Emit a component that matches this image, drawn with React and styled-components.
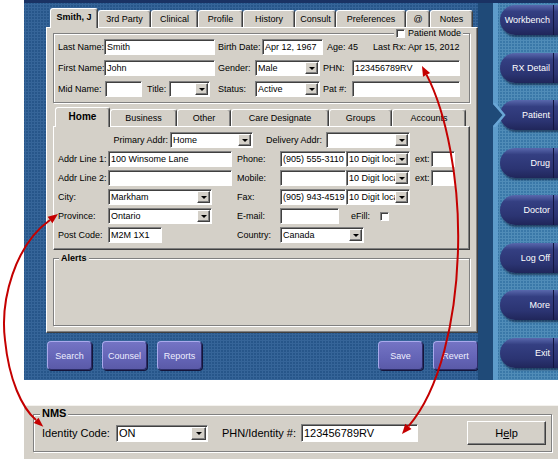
import React from 'react'
import styled, { createGlobalStyle } from 'styled-components'

const GlobalStyle = createGlobalStyle`
  body {
    margin: 0;
    background: #fff;
    font-family: "Liberation Sans", Arial, sans-serif;
  }
`

const topTabs = [
  { name: 'Smith, J', w: 48, active: true },
  { name: '3rd Party', w: 53 },
  { name: 'Clinical', w: 47 },
  { name: 'Profile', w: 45 },
  { name: 'History', w: 52 },
  { name: 'Consult', w: 41 },
  { name: 'Preferences', w: 70 },
  { name: '@', w: 24 },
  { name: 'Notes', w: 43 },
]

const addrTabs = [
  { name: 'Home', w: 55, active: true },
  { name: 'Business', w: 67 },
  { name: 'Other', w: 54 },
  { name: 'Care Designate', w: 98 },
  { name: 'Groups', w: 63 },
  { name: 'Accounts', w: 74 },
]

const sideNav = ['Workbench', 'RX Detail', 'Patient', 'Drug', 'Doctor', 'Log Off', 'More', 'Exit']

const Select = ({ w, h, big, children }) => (
  <SelectBox $w={w} $h={h}>
    <SelectValue>{children}</SelectValue>
    <DropBtn $big={big} />
  </SelectBox>
)

const App = () => {
  return (
    <Page>
      <GlobalStyle />
      <Screen>
        <MainArea>
          <Window>
            <TabRow>
              {topTabs.map((t) => (
                <Tab key={t.name} $w={t.w} $active={t.active}>{t.name}</Tab>
              ))}
            </TabRow>
            <Panel>
              <GroupBox $h={70}>
                <CheckLegend><Check />Patient Mode</CheckLegend>
                <Row>
                  <Label $w={46}>Last Name:</Label>
                  <Field $w={111}>Smith</Field>
                  <Label $w={47} $gap={3}>Birth Date:</Label>
                  <Field $w={61}>Apr 12, 1967</Field>
                  <Label $w={50} $gap={4}>Age: 45</Label>
                  <Label $w={90}>Last Rx: Apr 15, 2012</Label>
                </Row>
                <Row>
                  <Label $w={46}>First Name:</Label>
                  <Field $w={111}>John</Field>
                  <Label $w={40} $gap={3}>Gender:</Label>
                  <Select w={65}>Male</Select>
                  <Label $w={32} $gap={3}>PHN:</Label>
                  <Field $w={108}>123456789RV</Field>
                </Row>
                <Row>
                  <Label $w={47}>Mid Name:</Label>
                  <Field $w={37} />
                  <Label $w={27} $gap={5}>Title:</Label>
                  <Select w={41} />
                  <Label $w={45} $gap={8}>Status:</Label>
                  <Select w={65}>Active</Select>
                  <Label $w={32} $gap={3}>Pat #:</Label>
                  <Field $w={108} />
                </Row>
              </GroupBox>

              <InnerTabRow>
                {addrTabs.map((t) => (
                  <Tab key={t.name} $w={t.w} $active={t.active} $inner>{t.name}</Tab>
                ))}
              </InnerTabRow>
              <TabPanel>
                <Row>
                  <Label $w={112} $right>Primary Addr:</Label>
                  <Select w={83}>Home</Select>
                  <Label $w={73} $gap={13}>Delivery Addr:</Label>
                  <Select w={84} />
                </Row>
                <Row>
                  <Label $w={50}>Addr Line 1:</Label>
                  <Field $w={124}>100 Winsome Lane</Field>
                  <Label $w={48} $gap={5}>Phone:</Label>
                  <Field $w={66}>(905) 555-3110</Field>
                  <Select w={64}>10 Digit local</Select>
                  <Label $w={21} $gap={5}>ext:</Label>
                  <Field $w={24} />
                </Row>
                <Row>
                  <Label $w={50}>Addr Line 2:</Label>
                  <Field $w={124} />
                  <Label $w={48} $gap={5}>Mobile:</Label>
                  <Field $w={66} />
                  <Select w={64}>10 Digit local</Select>
                  <Label $w={21} $gap={5}>ext:</Label>
                  <Field $w={24} />
                </Row>
                <Row>
                  <Label $w={50}>City:</Label>
                  <Select w={104}>Markham</Select>
                  <Label $w={68} $gap={25}>Fax:</Label>
                  <Field $w={66}>(905) 943-4519</Field>
                  <Select w={64}>10 Digit local</Select>
                </Row>
                <Row>
                  <Label $w={50}>Province:</Label>
                  <Select w={104}>Ontario</Select>
                  <Label $w={68} $gap={25}>E-mail:</Label>
                  <Field $w={59} />
                  <Label $w={41} $gap={12}>eFill:</Label>
                  <Check />
                </Row>
                <Row>
                  <Label $w={50}>Post Code:</Label>
                  <Field $w={54}>M2M 1X1</Field>
                  <Label $w={118} $gap={75}>Country:</Label>
                  <Select w={84}>Canada</Select>
                </Row>
              </TabPanel>

              <GroupBox $h={68} $mt={8}>
                <Legend>Alerts</Legend>
              </GroupBox>
            </Panel>
          </Window>

          <ButtonRow>
            <ActionButton>Search</ActionButton>
            <ActionButton>Counsel</ActionButton>
            <ActionButton>Reports</ActionButton>
            <Spacer />
            <ActionButton>Save</ActionButton>
            <ActionButton>Revert</ActionButton>
          </ButtonRow>
        </MainArea>

        <Sidebar>
          <DarkStrip />
          <LightLine />
          <SideBody>
            {sideNav.map((name) => (
              <SideButton key={name}>{name}</SideButton>
            ))}
          </SideBody>
          <Pointer width="16" height="24" viewBox="0 0 16 24">
            <polygon points="0,0 11,12 0,24" fill="#1f4a78" />
            <polyline points="2,0 12,12 2,24" fill="none" stroke="#6aa6d6" strokeWidth="2.5" />
          </Pointer>
        </Sidebar>
      </Screen>

      <NmsPanel>
        <NmsBox>
          <NmsLegend>NMS</NmsLegend>
          <NmsLabel $w={74}>Identity Code:</NmsLabel>
          <Select w={92} h={17} big>ON</Select>
          <NmsLabel $w={93} $gap={14}>PHN/Identity #:</NmsLabel>
          <Field $w={117} $h={18}>123456789RV</Field>
          <Spacer />
          <HelpButton>H<u>e</u>lp</HelpButton>
        </NmsBox>
      </NmsPanel>

      <Arrows width="558" height="459" viewBox="0 0 558 459">
        <g stroke="#c40000" strokeWidth="2" fill="none">
          <path d="M426.6,74.9 C446,112 460,180 458,250 C456,320 440,390 408.4,426.3" />
          <path d="M50,220 C15,245 0,300 5,340 C9,380 22,408 36,420" />
        </g>
        <g fill="#c40000">
          <polygon points="422,66 430.1,73.1 423,76.7" />
          <polygon points="402,434 411.5,428.9 405.3,423.7" />
          <polygon points="58,214 52.4,223.2 47.6,216.8" />
          <polygon points="43.3,426.8 38.5,417.8 33.7,423" />
        </g>
      </Arrows>
    </Page>
  )
}

export default App

const Page = styled.div`
  position: relative;
  width: 558px;
  height: 459px;
  overflow: hidden;
  font-size: 9px;
  color: #000;
`

const Screen = styled.div`
  margin-left: 24px;
  height: 380px;
  display: flex;
  border-top: 3px solid #1a3263;
  box-sizing: border-box;
  background-color: #27568a;
  background-image: radial-gradient(rgba(120, 170, 220, 0.18) 1px, transparent 1.2px);
  background-size: 3px 3px;
`

const MainArea = styled.div`
  width: 454px;
  flex-shrink: 0;
  box-sizing: border-box;
  padding: 5px 0 0 22px;
  display: flex;
  flex-direction: column;
`

const Window = styled.div`
  width: 432px;
`

const TabRow = styled.div`
  display: flex;
  align-items: flex-end;
  height: 19px;
  padding-left: 4px;
`

const InnerTabRow = styled(TabRow)`
  margin-top: 4px;
  padding-left: 2px;
  height: 19px;
`

const Tab = styled.div`
  position: relative;
  z-index: ${(p) => (p.$active ? 2 : 1)};
  width: ${(p) => p.$w}px;
  height: ${(p) => (p.$active ? 20 : 17)}px;
  margin-bottom: ${(p) => (p.$active ? -1 : 0)}px;
  flex-shrink: 0;
  box-sizing: border-box;
  display: flex;
  align-items: center;
  justify-content: center;
  background: #d4d0c8;
  border-top: 1px solid #fff;
  border-left: 1px solid #fff;
  border-right: 1px solid #404040;
  box-shadow: inset -1px 0 0 #808080;
  border-radius: 3px 3px 0 0;
  font-weight: ${(p) => (p.$active ? 'bold' : 'normal')};
  font-size: ${(p) => (p.$inner && p.$active ? 10 : 9)}px;
  padding-bottom: ${(p) => (p.$active ? 3 : 0)}px;
`

const Panel = styled.div`
  height: 306px;
  box-sizing: border-box;
  background: #d4d0c8;
  border: 1px solid;
  border-color: #fff #404040 #404040 #fff;
  box-shadow: inset -1px -1px 0 #808080;
  padding: 5px 7px 6px 6px;
  display: flex;
  flex-direction: column;
`

const GroupBox = styled.div`
  position: relative;
  height: ${(p) => p.$h}px;
  margin-top: ${(p) => p.$mt || 0}px;
  flex-shrink: 0;
  box-sizing: border-box;
  border: 1px solid #808080;
  box-shadow: inset 1px 1px 0 #fff, 1px 1px 0 #fff;
  padding: 5px 0 0 4px;
  display: flex;
  flex-direction: column;
  gap: 5px;
`

const CheckLegend = styled.div`
  position: absolute;
  top: -6px;
  right: 6px;
  display: flex;
  align-items: center;
  gap: 3px;
  padding: 0 2px;
  background: #d4d0c8;
  font-size: 9px;
`

const Legend = styled.div`
  position: absolute;
  top: -6px;
  left: 5px;
  padding: 0 2px;
  background: #d4d0c8;
  font-weight: bold;
  font-size: 9px;
`

const Check = styled.span`
  width: 9px;
  height: 9px;
  flex-shrink: 0;
  box-sizing: border-box;
  background: #fff;
  border: 1px solid;
  border-color: #808080 #fff #fff #808080;
  box-shadow: inset 1px 1px 0 #404040;
`

const TabPanel = styled.div`
  height: 124px;
  flex-shrink: 0;
  box-sizing: border-box;
  border: 1px solid;
  border-color: #fff #404040 #404040 #fff;
  box-shadow: inset -1px -1px 0 #808080;
  padding: 5px 0 0 4px;
  display: flex;
  flex-direction: column;
  gap: 3px;
`

const Row = styled.div`
  display: flex;
  align-items: center;
  height: 16px;
`

const Label = styled.span`
  width: ${(p) => p.$w}px;
  padding-left: ${(p) => p.$gap || 0}px;
  padding-right: ${(p) => (p.$right ? 2 : 0)}px;
  text-align: ${(p) => (p.$right ? 'right' : 'left')};
  box-sizing: border-box;
  flex-shrink: 0;
  white-space: nowrap;
`

const Field = styled.div`
  width: ${(p) => p.$w}px;
  height: ${(p) => p.$h || 16}px;
  flex-shrink: 0;
  box-sizing: border-box;
  display: flex;
  align-items: center;
  padding-left: 2px;
  background: #fff;
  border: 1px solid;
  border-color: #808080 #fff #fff #808080;
  box-shadow: inset 1px 1px 0 #404040;
  white-space: nowrap;
  overflow: hidden;
`

const SelectBox = styled(Field)`
  padding-right: 1px;
`

const SelectValue = styled.span`
  flex: 1;
  overflow: hidden;
  white-space: nowrap;
`

const DropBtn = styled.span`
  flex-shrink: 0;
  width: ${(p) => (p.$big ? 15 : 13)}px;
  height: calc(100% - 2px);
  box-sizing: border-box;
  display: flex;
  align-items: center;
  justify-content: center;
  background: #d4d0c8;
  border: 1px solid;
  border-color: #fff #404040 #404040 #fff;
  box-shadow: inset -1px -1px 0 #808080;

  &::after {
    content: '';
    border-left: 3px solid transparent;
    border-right: 3px solid transparent;
    border-top: 3px solid #000;
    margin-top: 1px;
  }
`

const ButtonRow = styled.div`
  display: flex;
  gap: 10px;
  margin-top: 8px;
  padding-left: 1px;
  width: 432px;
  box-sizing: border-box;
`

const Spacer = styled.div`
  flex: 1;
`

const ActionButton = styled.div`
  width: 45px;
  height: 29px;
  box-sizing: border-box;
  display: flex;
  align-items: center;
  justify-content: center;
  background: linear-gradient(180deg, #7474c4 0%, #6464b6 60%, #5a5aa8 100%);
  border: 1px solid;
  border-color: #a9a9ec #2c2c66 #2c2c66 #a9a9ec;
  border-radius: 4px;
  box-shadow: 1px 1px 0 #15153a;
  color: #eeeeff;
  font-size: 9px;
`

const Sidebar = styled.div`
  position: relative;
  flex: 1;
  display: flex;
`

const DarkStrip = styled.div`
  width: 15px;
  background: #1f4a78;
`

const LightLine = styled.div`
  width: 5px;
  background: #5e9ccb;
`

const SideBody = styled.div`
  flex: 1;
  display: flex;
  flex-direction: column;
  gap: 17.5px;
  padding: 2px 0 0 2px;
  background-color: #3a78a8;
  background-image: radial-gradient(rgba(160, 210, 240, 0.22) 1px, transparent 1.2px);
  background-size: 3px 3px;
`

const SideButton = styled.div`
  position: relative;
  height: 30px;
  box-sizing: border-box;
  display: flex;
  align-items: center;
  justify-content: flex-end;
  padding-right: 8px;
  border-radius: 15px 0 0 15px;
  background: linear-gradient(180deg, #5968ad 0%, #343f82 22%, #2b3472 70%, #20265a 100%);
  box-shadow: 1px 2px 2px rgba(5, 15, 40, 0.55);
  color: #fff;
  font-size: 9px;

  &::after {
    content: '';
    position: absolute;
    top: 0;
    bottom: 0;
    right: 4px;
    width: 1px;
    background: #121640;
  }
`

const Pointer = styled.svg`
  position: absolute;
  left: 14px;
  top: 100px;
`

const NmsPanel = styled.div`
  margin: 25px 0 0 24px;
  height: 54px;
  box-sizing: border-box;
  padding: 8px 6px 0 9px;
  background: #d4d0c8;
  border-top: 1px solid #f4f2ee;
  font-size: 11px;
`

const NmsBox = styled.div`
  position: relative;
  height: 38px;
  box-sizing: border-box;
  display: flex;
  align-items: center;
  padding: 0 5px 0 8px;
  border: 1px solid #808080;
  box-shadow: inset 1px 1px 0 #fff, 1px 1px 0 #fff;
`

const NmsLegend = styled.div`
  position: absolute;
  top: -8px;
  left: 6px;
  padding: 0 2px;
  background: #d4d0c8;
  font-weight: bold;
  font-size: 11px;
`

const NmsLabel = styled.span`
  width: ${(p) => p.$w}px;
  padding-left: ${(p) => p.$gap || 0}px;
  box-sizing: border-box;
  flex-shrink: 0;
  white-space: nowrap;
`

const HelpButton = styled.div`
  width: 79px;
  height: 24px;
  box-sizing: border-box;
  display: flex;
  align-items: center;
  justify-content: center;
  background: #d4d0c8;
  border: 1px solid;
  border-color: #fff #404040 #404040 #fff;
  box-shadow: inset -1px -1px 0 #808080;
  font-size: 11px;

  u {
    text-decoration: underline;
  }
`

const Arrows = styled.svg`
  position: absolute;
  top: 0;
  left: 0;
  pointer-events: none;
  z-index: 10;
`
